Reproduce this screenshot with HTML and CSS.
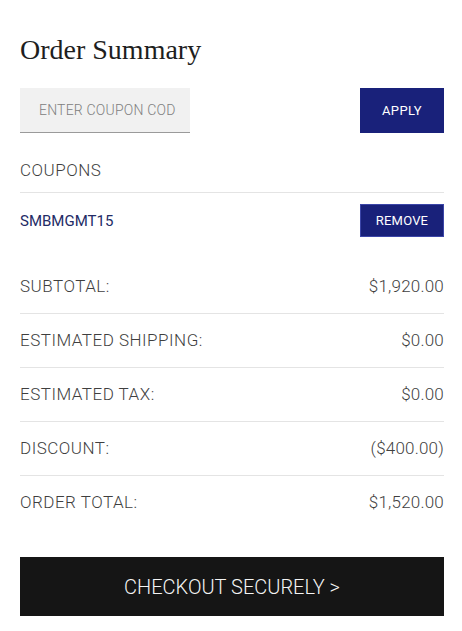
FILE: index.html
```html
<!DOCTYPE html>
<html lang="en">
<head>
    <meta charset="UTF-8">
    <meta name="viewport" content="width=device-width, initial-scale=1.0">
    <title>Order Summary</title>
    <link rel="stylesheet" href="styles.css">
</head>
<body>
    <div class="summary">
        <h1>Order Summary</h1>
        <form class="coupon-form" id="coupon-form">
            <input type="text" name="coupon" placeholder="ENTER COUPON CODE">
            <button type="submit" class="btn-apply">APPLY</button>
        </form>
        <div class="coupons-title">COUPONS</div>
        <div class="coupon-row">
            <span class="coupon-code">SMBMGMT15</span>
            <button type="button" class="btn-remove">REMOVE</button>
        </div>
        <div class="totals">
            <div class="total-row">
                <span>SUBTOTAL:</span>
                <span>$1,920.00</span>
            </div>
            <div class="total-row">
                <span>ESTIMATED SHIPPING:</span>
                <span>$0.00</span>
            </div>
            <div class="total-row">
                <span>ESTIMATED TAX:</span>
                <span>$0.00</span>
            </div>
            <div class="total-row">
                <span>DISCOUNT:</span>
                <span>($400.00)</span>
            </div>
            <div class="total-row">
                <span>ORDER TOTAL:</span>
                <span>$1,520.00</span>
            </div>
        </div>
        <button type="button" class="btn-checkout">CHECKOUT SECURELY &gt;</button>
    </div>
</body>
</html>
```

FILE: styles.css
```css
body {
    margin: 0;
    padding: 33px 18px 0 20px;
    font-family: Roboto, "Liberation Sans", sans-serif;
    font-weight: 300;
    color: #3f3f3f;
    background-color: #fff;
}
.summary {
    width: 424px;
}
h1 {
    margin: 0;
    font-family: "Liberation Serif", serif;
    font-size: 28px;
    font-weight: normal;
    line-height: 34px;
    color: #1e1e1e;
}
.coupon-form {
    display: flex;
    justify-content: space-between;
    align-items: flex-start;
    margin: 21px 0 0;
}
.coupon-form input {
    box-sizing: border-box;
    width: 170px;
    height: 45px;
    padding: 0 14px 0 19px;
    font-family: Roboto, sans-serif;
    font-size: 14px;
    font-weight: 300;
    letter-spacing: 0.2px;
    background-color: #f1f1f1;
    border: none;
    border-bottom: 1px solid #9a9a9a;
    outline: none;
}
.coupon-form input::placeholder {
    color: #808080;
}
button {
    font-family: Roboto, sans-serif;
    font-weight: 400;
    color: #fff;
    border: none;
    cursor: pointer;
}
.btn-apply {
    width: 84px;
    height: 45px;
    font-size: 13px;
    letter-spacing: 0.4px;
    background-color: #19217a;
}
.coupons-title {
    padding: 27px 0 12px;
    font-size: 17px;
    line-height: 20px;
    letter-spacing: 0.5px;
    border-bottom: 1px solid #e4e4e4;
}
.coupon-row {
    display: flex;
    justify-content: space-between;
    align-items: center;
    padding: 11px 0 23px;
}
.coupon-code {
    font-size: 15px;
    font-weight: 400;
    color: #232b66;
}
.btn-remove {
    box-sizing: border-box;
    width: 84px;
    height: 33px;
    font-size: 13px;
    letter-spacing: 0.2px;
    background-color: #19217a;
    border: 1px solid #3c46a8;
}
.total-row {
    display: flex;
    justify-content: space-between;
    align-items: center;
    box-sizing: border-box;
    height: 54px;
    padding-bottom: 2px;
    font-size: 17px;
    letter-spacing: 0.5px;
    border-bottom: 1px solid #e4e4e4;
}
.total-row span:last-child {
    letter-spacing: 0.2px;
}
.total-row:last-child {
    border-bottom: none;
}
.btn-checkout {
    display: block;
    width: 100%;
    height: 59px;
    margin-top: 27px;
    font-size: 20px;
    font-weight: 300;
    color: #f4f4f4;
    background-color: #151515;
}
```
